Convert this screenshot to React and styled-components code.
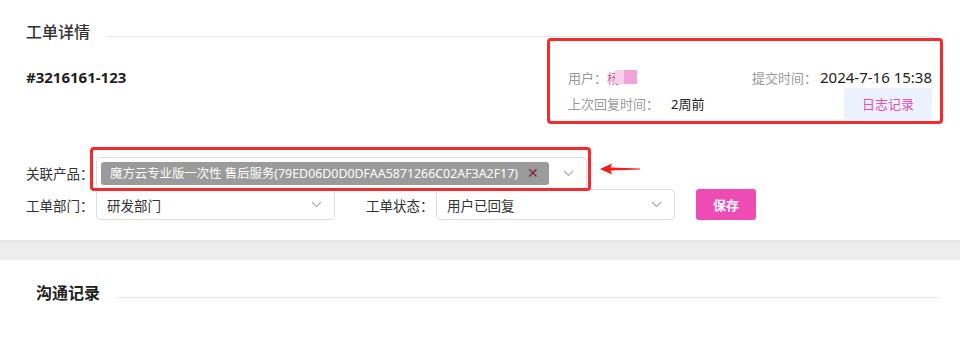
import React from "react"
import styled, { createGlobalStyle } from "styled-components"

const GlobalStyle = createGlobalStyle`
  html, body {
    margin: 0;
    padding: 0;
    background: #fff;
    font-family: "Noto Sans", "Noto Sans CJK SC", sans-serif;
    color: #333;
  }
`

const Chevron = () => (
  <svg width="11" height="7" viewBox="0 0 11 7" fill="none">
    <path d="M1 1l4.5 4.5L10 1" stroke="#a8abb2" strokeWidth="1.1" />
  </svg>
)

const Page = styled.div`
  position: relative;
  width: 960px;
  height: 340px;
  overflow: hidden;
`

const Card = styled.section`
  height: ${p => p.$height}px;
  padding: ${p => p.$pad};
  box-sizing: border-box;
`

const Band = styled.div`
  height: 20px;
  background: linear-gradient(#e6e6e6, #ededed 4px);
`

const Heading = styled.div`
  display: flex;
  align-items: flex-end;
`

const HeadingText = styled.h2`
  margin: 0;
  font-size: 16px;
  line-height: 24px;
  font-weight: ${p => (p.$bold ? 700 : 500)};
  color: ${p => (p.$bold ? "#222" : "#333")};
  white-space: nowrap;
`

const Rule = styled.div`
  flex: 1;
  height: 1px;
  background: #e8e8e8;
  margin: 0 0 7px ${p => p.$gap}px;
`

const Top = styled.div`
  display: flex;
  justify-content: space-between;
  margin-top: 23px;
`

const TicketNo = styled.div`
  font-size: 15px;
  font-weight: 700;
  color: #1f1f1f;
  line-height: 20px;
`

const Info = styled.div`
  width: 364px;
  display: flex;
  flex-direction: column;
`

const InfoRow = styled.div`
  display: flex;
  justify-content: space-between;
  align-items: center;
  height: ${p => p.$h}px;
  font-size: 13px;
`

const Field = styled.span`
  display: flex;
  align-items: center;
  white-space: nowrap;
`

const Key = styled.span`
  color: #9a9a9a;
  margin-right: ${p => p.$gap || 0}px;
`

const Value = styled.span`
  color: #222;
  font-size: ${p => p.$size || 13}px;
`

const UserName = styled.span`
  color: #e8559f;
  display: inline-flex;
  align-items: center;
`

const Mosaic = styled.span`
  display: inline-block;
  width: 22px;
  height: 14px;
  margin-left: -5px;
  background: linear-gradient(90deg, #f7cfe9 0 40%, #f0a3d9 40% 100%);
`

const LogButton = styled.button`
  width: 88px;
  height: 32px;
  border: none;
  border-radius: 3px;
  background: #ecf2fd;
  color: #e84db0;
  font-family: inherit;
  font-size: 13px;
  cursor: pointer;
`

const Form = styled.div`
  margin-top: 37px;
  display: flex;
  flex-direction: column;
`

const FormRow = styled.div`
  display: flex;
  align-items: center;
`

const Label = styled.label`
  width: 70px;
  font-size: 13.5px;
  color: #333;
  white-space: nowrap;
  margin-left: ${p => p.$offset || 0}px;
`

const Select = styled.div`
  width: ${p => p.$w}px;
  height: ${p => p.$h || 31}px;
  box-sizing: border-box;
  border: 1px solid #dcdfe6;
  border-radius: 4px;
  display: flex;
  align-items: center;
  padding: 0 12px 0 ${p => p.$padLeft || 10}px;
  font-size: 13.5px;
  color: #333;
  background: #fff;
`

const SelectText = styled.span`
  flex: 1;
  white-space: nowrap;
`

const Tag = styled.span`
  display: inline-flex;
  align-items: center;
  height: 23px;
  padding: 0 10px 0 9px;
  border-radius: 3px;
  background: #9b9b9b;
  color: #fff;
  font-size: 12.4px;
  white-space: nowrap;
  margin-right: auto;
`

const TagClose = styled.span`
  margin-left: 9px;
  color: #7a2b46;
  font-size: 14px;
  line-height: 1;
`

const SaveButton = styled.button`
  margin-left: 21px;
  width: 60px;
  height: 31px;
  border: none;
  border-radius: 3px;
  background: #ee4bb5;
  color: #fff;
  font-family: inherit;
  font-size: 13px;
  font-weight: 700;
`

const Mark = styled.div`
  position: absolute;
  left: ${p => p.$x}px;
  top: ${p => p.$y}px;
  width: ${p => p.$w}px;
  height: ${p => p.$h}px;
  box-sizing: border-box;
  border: 3px solid #f62a2a;
  border-radius: 4px;
  pointer-events: none;
`

const Arrow = styled.svg`
  position: absolute;
  left: 598px;
  top: 162px;
`

export default function App() {
  return (
    <Page>
      <GlobalStyle />
      <Card $height={240} $pad="20px 28px 0 26px">
        <Heading>
          <HeadingText>工单详情</HeadingText>
          <Rule $gap={16} />
        </Heading>
        <Top>
          <TicketNo>#3216161-123</TicketNo>
          <Info>
            <InfoRow $h={20}>
              <Field>
                <Key>用户：</Key>
                <UserName>
                  杨<Mosaic />
                </UserName>
              </Field>
              <Field>
                <Key $gap={3}>提交时间：</Key>
                <Value $size={15}>2024-7-16 15:38</Value>
              </Field>
            </InfoRow>
            <InfoRow $h={33}>
              <Field>
                <Key $gap={12}>上次回复时间：</Key>
                <Value>2周前</Value>
              </Field>
              <LogButton>日志记录</LogButton>
            </InfoRow>
          </Info>
        </Top>
        <Form>
          <FormRow>
            <Label>关联产品：</Label>
            <Select $w={491} $h={32} $padLeft={4}>
              <Tag>
                魔方云专业版一次性 售后服务(79ED06D0D0DFAA5871266C02AF3A2F17)
                <TagClose>✕</TagClose>
              </Tag>
              <Chevron />
            </Select>
          </FormRow>
          <FormRow>
            <Label>工单部门：</Label>
            <Select $w={239}>
              <SelectText>研发部门</SelectText>
              <Chevron />
            </Select>
            <Label $offset={31}>工单状态：</Label>
            <Select $w={239}>
              <SelectText>用户已回复</SelectText>
              <Chevron />
            </Select>
            <SaveButton>保存</SaveButton>
          </FormRow>
        </Form>
      </Card>
      <Band />
      <Card $height={80} $pad="21px 20px 0 36px">
        <Heading>
          <HeadingText $bold>沟通记录</HeadingText>
          <Rule $gap={16} />
        </Heading>
      </Card>
      <Mark $x={547} $y={38} $w={396} $h={86} />
      <Mark $x={90} $y={147} $w={501} $h={44} />
      <Arrow width="44" height="14" viewBox="0 0 44 14">
        <path d="M2 7L14 1.5L12.5 5.5L42 6.4L42 7.6L12.5 8.5L14 12.5Z" fill="#f41d1d" />
      </Arrow>
    </Page>
  )
}
